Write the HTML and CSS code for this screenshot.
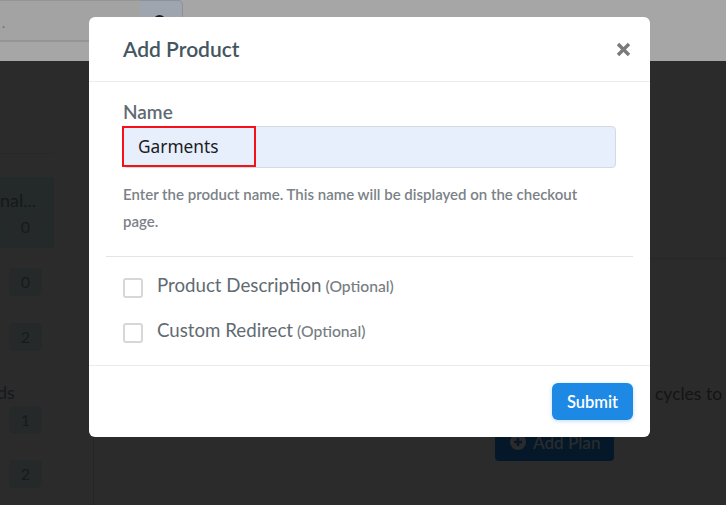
FILE: index.html
```html
<!DOCTYPE html>
<html lang="en">
<head>
<meta charset="utf-8">
<title>Add Product</title>
<link rel="stylesheet" href="styles.css">
</head>
<body>
<div class="page">
  <header class="topbar">
    <div class="search">
      <div class="search-input"><span class="search-dot">.</span></div>
      <div class="search-btn">
        <svg class="search-icon" width="16" height="16" viewBox="0 0 16 16"><circle cx="7.500" cy="7.500" r="5" fill="none" stroke="#1d1d1d" stroke-width="3"/></svg>
      </div>
    </div>
  </header>
  <div class="content">
    <aside class="sidebar">
      <div class="side-list">
        <div class="side-item side-item-active"><div class="side-name">nal...</div><span class="badge">0</span></div>
        <div class="side-item"><span class="badge">0</span></div>
        <div class="side-item"><span class="badge">2</span></div>
        <div class="side-item side-item-named"><div class="side-name">ds</div><span class="badge">1</span></div>
        <div class="side-item"><span class="badge">2</span></div>
      </div>
    </aside>
    <main class="main">
      <div class="main-rule"></div>
      <p class="main-text">cycles to</p>
      <div class="main-actions">
        <button class="add-plan" type="button">
          <svg width="16" height="16" viewBox="0 0 16 16"><circle cx="8" cy="8" r="8" fill="#2b2b2b"/><path d="M8 4v8M4 8h8" stroke="#04182a" stroke-width="2.500"/></svg>
          Add Plan
        </button>
      </div>
    </main>
  </div>
  <section class="modal">
    <div class="modal-header">
      <h2 class="modal-title">Add Product</h2>
      <svg class="close" width="15" height="15" viewBox="0 0 15 15"><path d="M2 2l11 11M13 2L2 13" stroke="#7a7a7a" stroke-width="3.400" stroke-linecap="butt"/></svg>
    </div>
    <div class="modal-body">
      <label class="field-label">Name</label>
      <div class="name-input">
        <span class="name-value">Garments</span>
        <span class="highlight"></span>
      </div>
      <p class="hint">Enter the product name. This name will be displayed on the checkout page.</p>
    </div>
    <div class="options">
      <div class="option"><span class="checkbox"></span><span class="option-name">Product Description</span> <span class="option-note">(Optional)</span></div>
      <div class="option"><span class="checkbox"></span><span class="option-name">Custom Redirect</span> <span class="option-note">(Optional)</span></div>
    </div>
    <div class="modal-footer">
      <button class="submit" type="button">Submit</button>
    </div>
  </section>
</div>
</body>
</html>
```
FILE: styles.css
```css
* { box-sizing: border-box; }
html, body { margin: 0; padding: 0; }
body { font-family: "Lato", "Liberation Sans", sans-serif; background: #2b2b2b; }
.page { position: relative; width: 726px; height: 505px; overflow: hidden; background: #2b2b2b; }

.topbar { height: 61px; background: #a6a6a6; }
.search { display: flex; height: 42px; }
.search-input { width: 140px; height: 42px; background: #a3a3a3; border-bottom: 2px solid #959595; border-top: 1px solid #959595; padding: 14px 0 0 2px; font-size: 13px; line-height: 16px; color: #6b6b6b; }
.search-dot { display: block; }
.search-btn { width: 43px; height: 42px; background: #9fa5ae; border: 1px solid #8e9196; border-left: 0; border-radius: 0 5px 5px 0; padding: 13px 0 0 12px; }
.search-icon { display: block; }

.content { display: flex; height: 444px; }
.sidebar { width: 94px; border-right: 1px solid #242424; flex: none; padding-top: 92px; }
.side-list { width: 54px; border-top: 1px solid #282828; padding-top: 23px; overflow: hidden; }
.side-item { height: 55px; padding: 0 0 0 9px; }
.side-item-active { height: 71px; margin-bottom: 20px; background: #24292a; padding-top: 11px; }
.side-item-named { height: 80px; margin-top: 2px; }
.side-name { margin-left: -9px; height: 25px; font-size: 18px; line-height: 25px; color: #141a1b; white-space: nowrap; }
.side-item-named .side-name { margin-left: -12px; margin-bottom: 1px; }
.badge { display: block; width: 33px; height: 28px; border-radius: 5px; background: #25292a; color: #171b1c; font-size: 16px; line-height: 28px; text-align: center; }

.main { flex: 1; padding-top: 197px; }
.main-rule { height: 1px; background: #262626; }
.main-text { margin: 123px 0 0 0; padding-left: 561px; white-space: nowrap; font-size: 17.500px; line-height: 24px; color: #141414; }
.main-actions { padding-left: 401px; margin-top: 17px; }
.add-plan { display: flex; align-items: center; gap: 7px; width: 119px; height: 38px; padding: 0 0 0 15px; border: 0; border-radius: 4px; background: #04182a; color: #2b2b2b; font: 600 17px "Lato", sans-serif; }

.modal { position: absolute; left: 89px; top: 17px; width: 561px; height: 420px; background: #fff; border-radius: 6px; display: flex; flex-direction: column; }
.modal-header { height: 65px; flex: none; display: flex; align-items: center; justify-content: space-between; padding: 0 19px 0 34px; border-bottom: 1px solid #ececec; }
.modal-title { margin: 0; font-size: 21px; line-height: 24px; font-weight: 600; color: #44565f; }
.close { display: block; }
.modal-body { padding: 18px 34px 0; height: 174px; flex: none; }
.field-label { display: block; font-size: 19px; line-height: 24px; font-weight: 600; color: #5f6b72; margin-bottom: 2px; }
.name-input { position: relative; height: 42px; background: #e8effc; border: 1px solid #d6d9dd; border-radius: 4px; padding-left: 14px; font-size: 17.300px; line-height: 39px; color: #1c1c1c; font-family: "Noto Sans", "Open Sans", sans-serif; }
.highlight { position: absolute; left: -2px; top: -1px; width: 134px; height: 41px; border: 2px solid #f5101a; }
.hint { margin: 13px 0 0; max-width: 470px; font-size: 15px; line-height: 27px; font-weight: 600; color: #7b8287; }
.options { margin: 0 17px; border-top: 1px solid #e4e4e4; padding-top: 8px; height: 109px; flex: none; }
.option { display: flex; align-items: center; height: 45px; padding-left: 17px; font-size: 18.700px; color: #5f6b72; white-space: pre; }
.checkbox { width: 20px; height: 20px; border: 2px solid #d7d7d7; border-radius: 3px; margin-right: 14px; flex: none; }
.option-name { line-height: 24px; margin-top: -6px; }
.option-note { font-size: 15.700px; font-weight: 500; color: #767d82; margin-left: 4px; margin-top: -3px; }
.modal-footer { flex: 1; border-top: 1px solid #ececec; display: flex; justify-content: flex-end; align-items: flex-start; padding: 17px 17px 0 0; }
.submit { width: 81px; height: 37px; border: 0; border-radius: 6px; background: #1e88e5; color: #fff; font: 600 16.500px "Lato", sans-serif; box-shadow: 0 1px 4px rgba(30, 136, 229, .3); }
```
